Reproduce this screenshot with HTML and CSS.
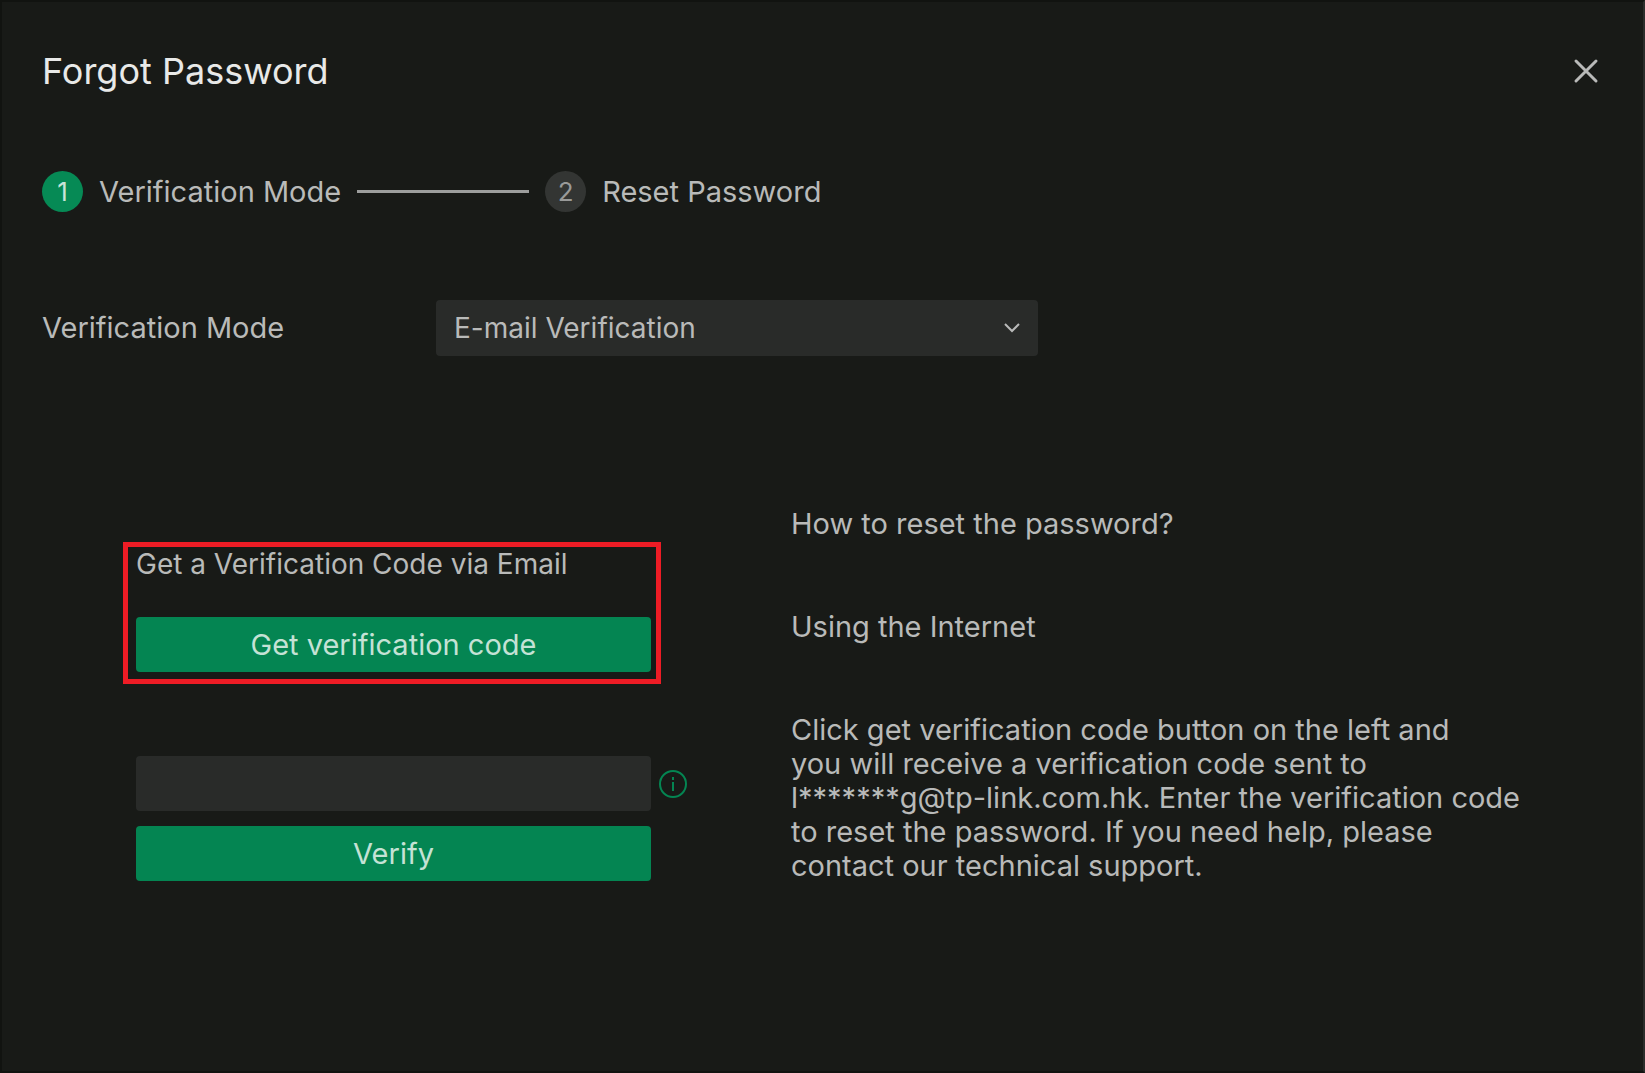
FILE: index.html
```html
<!DOCTYPE html>
<html lang="en">
<head>
    <meta charset="UTF-8">
    <meta name="viewport" content="width=device-width, initial-scale=1.0">
    <title>Forgot Password</title>
    <link rel="stylesheet" href="styles.css">
</head>
<body>

<main class="dialog">
    <header class="dialog-header">
        <h1>Forgot Password</h1>
        <button type="button" class="close" aria-label="Close">
            <svg width="26" height="26" viewBox="0 0 26 26" fill="none" stroke="currentColor" stroke-width="3" stroke-linecap="round">
                <path d="M3 3L23 23M23 3L3 23"/>
            </svg>
        </button>
    </header>

    <ol class="steps">
        <li class="step active"><span class="number">1</span>Verification Mode</li>
        <li class="line" aria-hidden="true"></li>
        <li class="step"><span class="number">2</span>Reset Password</li>
    </ol>

    <div class="mode">
        <label for="mode">Verification Mode</label>
        <div class="select-wrap">
            <select id="mode" name="mode">
                <option>E-mail Verification</option>
            </select>
            <svg class="chevron" width="18" height="12" viewBox="0 0 18 12" fill="none" stroke="currentColor" stroke-width="2">
                <path d="M2 2L9 9L16 2"/>
            </svg>
        </div>
    </div>

    <div class="content">
        <form class="code-form" action="#" method="post">
            <div class="get-code">
                <p id="code-title">Get a Verification Code via Email</p>
                <button type="button" class="btn">Get verification code</button>
            </div>
            <div class="verify">
                <div class="code-row">
                    <input type="text" name="code" aria-labelledby="code-title">
                    <svg class="info" width="30" height="30" viewBox="0 0 30 30" fill="none" stroke="currentColor" stroke-width="2">
                        <circle cx="15" cy="15" r="13"/>
                        <path d="M15 8V11M15 13V22"/>
                    </svg>
                </div>
                <button type="submit" class="btn">Verify</button>
            </div>
        </form>

        <section class="help">
            <p>How to reset the password?</p>
            <p>Using the Internet</p>
            <p>Click get verification code button on the left and<br>
            you will receive a verification code sent to<br>
            <span class="email">l*******g@tp-link.com.hk.</span> Enter the verification code<br>
            to reset the password. If you need help, please<br>
            contact our technical support.</p>
        </section>
    </div>
</main>

</body>
</html>
```
FILE: styles.css
```css
* {
    box-sizing: border-box;
}
body {
    margin: 0;
    background-color: #181a17;
    color: #b9bab9;
    font-family: Inter, "Liberation Sans", sans-serif;
    font-size: 28px;
    line-height: 34px;
}
h1, p, ol {
    margin: 0;
    padding: 0;
}
button, input, select {
    font: inherit;
    color: inherit;
    border: none;
}
.dialog {
    min-height: 100vh;
    padding: 48px 40px;
    border: 2px solid #111310;
    border-right-color: #2b2d2b;
}
.dialog-header {
    display: flex;
    justify-content: space-between;
    align-items: center;
}
.dialog-header h1 {
    color: #e8e9e8;
    font-size: 36px;
    font-weight: 400;
    line-height: 42px;
}
.close {
    display: flex;
    padding: 4px;
    background: none;
    cursor: pointer;
}
.steps {
    display: flex;
    align-items: center;
    gap: 16px;
    margin-top: 79px;
    font-size: 29px;
    list-style: none;
}
.step {
    display: flex;
    align-items: center;
    gap: 16px;
}
.number {
    width: 41px;
    height: 41px;
    border-radius: 50%;
    background-color: #333533;
    color: #999a99;
    font-size: 26px;
    line-height: 42px;
    text-align: center;
}
.active .number {
    background-color: #068a55;
    color: #c8e4d8;
}
.line {
    width: 172px;
    height: 3px;
    background-color: #9d9e9d;
}
.mode {
    display: flex;
    align-items: center;
    margin-top: 88px;
}
.mode label {
    width: 394px;
    font-size: 29px;
}
.select-wrap {
    position: relative;
    width: 602px;
}
.select-wrap select {
    appearance: none;
    width: 100%;
    height: 56px;
    padding: 0 18px;
    border-radius: 4px;
    background-color: #292b29;
}
.chevron {
    position: absolute;
    right: 17px;
    top: 22px;
    pointer-events: none;
}
.content {
    display: flex;
    gap: 103px;
    margin-top: 151px;
    padding-left: 81px;
}
.code-form {
    width: 565px;
    padding-top: 35px;
}
.get-code {
    width: 538px;
    padding: 0 5px 7px 8px;
    border: 5px solid #ee1c25;
}
.get-code p {
    margin-bottom: 36px;
}
.btn {
    display: block;
    width: 100%;
    height: 55px;
    border-radius: 4px;
    background-color: #048552;
    color: #c4e2d5;
    font-size: 29px;
    cursor: pointer;
}
.verify {
    margin-top: 72px;
    padding-left: 13px;
}
.code-row {
    display: flex;
    align-items: center;
    gap: 7px;
    margin-bottom: 15px;
}
.code-row input {
    width: 515px;
    height: 55px;
    padding: 0 18px;
    border-radius: 4px;
    background-color: #292b29;
}
.info {
    flex-shrink: 0;
    color: #048552;
}
.verify .btn {
    width: 515px;
}
.help {
    flex: 1;
    max-width: 760px;
    font-size: 29px;
}
.help p {
    margin-bottom: 69px;
}
.email {
    white-space: nowrap;
}
```
